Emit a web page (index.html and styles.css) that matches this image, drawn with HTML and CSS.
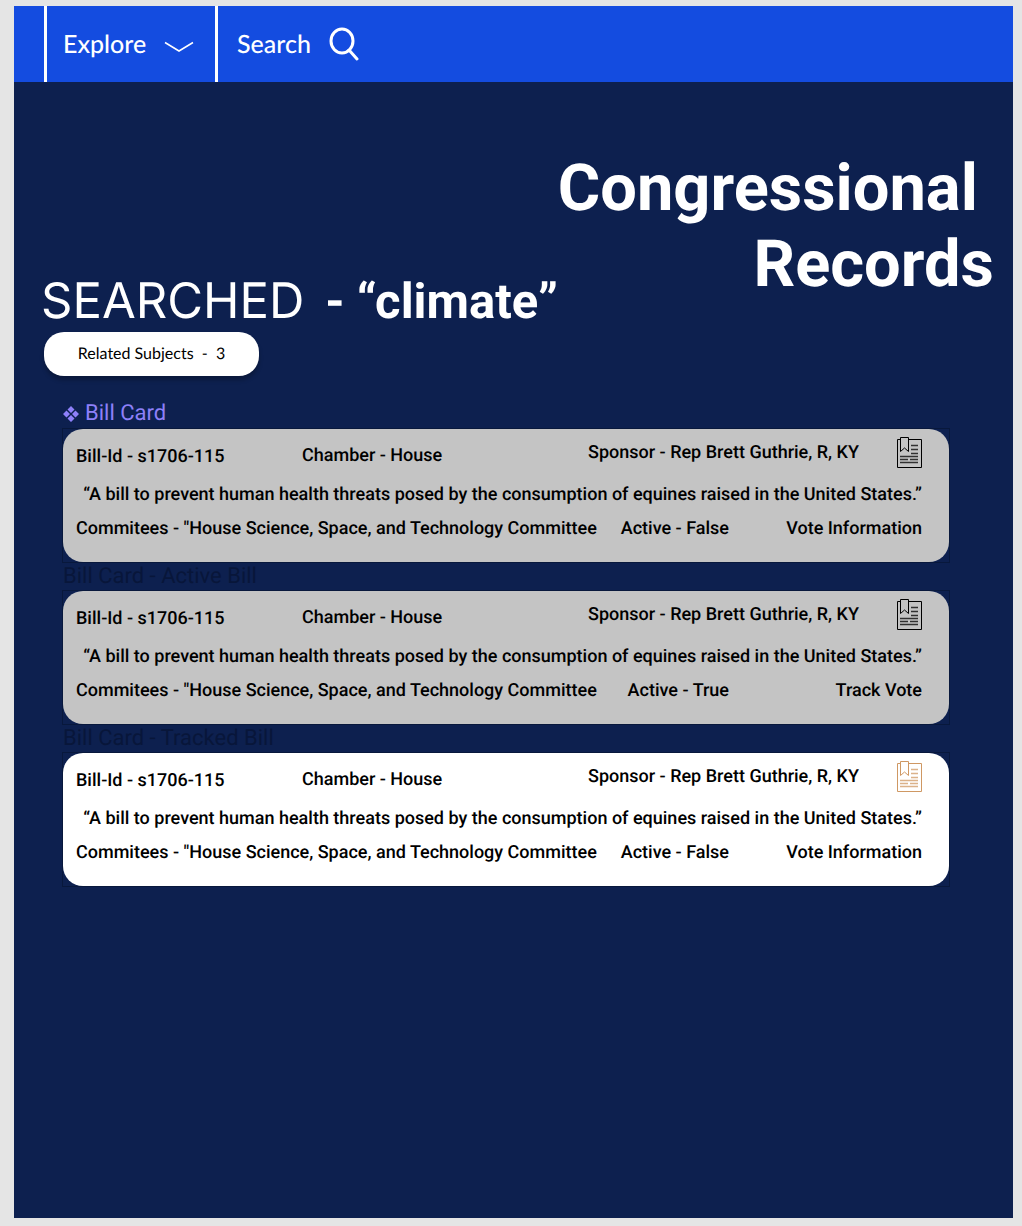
FILE: index.html
```html
<!DOCTYPE html>
<html lang="en">
<head>
<meta charset="utf-8">
<title>Congressional Records</title>
<link rel="stylesheet" href="styles.css">
</head>
<body>
<svg class="defs" aria-hidden="true">
  <symbol id="bill" viewBox="0 0 26 32">
    <path d="M4.500 3.500H1.500V31.500H25.500V3.500H12.500M4.500 15.500V1.500H12.500V15.500L8.500 12Z"/>
    <path d="M15 9.500H22M15 13.500H22M15 17.500H22M4 20.500H22M4 23.500H12M14 23.500H22M4 26.500H22" stroke-width="1.5" opacity=".75"/>
  </symbol>
</svg>
<div class="page">
  <nav class="nav">
    <button class="nav-item explore" type="button">Explore
      <svg class="chevron" viewBox="0 0 30 12" aria-hidden="true"><path d="M1 1.500 15 10 29 1.500"/></svg>
    </button>
    <button class="nav-item search" type="button">Search
      <svg class="lens" viewBox="0 0 30 34" aria-hidden="true"><ellipse cx="13" cy="14" rx="11" ry="12"/><path d="M20 23 28 32"/></svg>
    </button>
  </nav>
  <main>
    <h1 class="title">Congressional 
Records</h1>
    <h2 class="query"><span class="searched">SEARCHED</span><span>- “climate”</span></h2>
    <button class="subjects" type="button">Related Subjects&nbsp; -&nbsp; 3</button>
    <div class="bills">
      <h3 class="label label-main"><svg class="diamonds" viewBox="0 0 16 16" aria-hidden="true"><path d="M8 0 11.500 3.500 8 7 4.500 3.500ZM8 9 11.500 12.500 8 16 4.500 12.500ZM3.500 4.500 7 8 3.500 11.500 0 8ZM12.500 4.500 16 8 12.500 11.500 9 8Z"/></svg>Bill Card</h3>
      <div class="outline">
        <article class="card">
          <div class="row head"><span class="id">Bill-Id - s1706-115</span><span class="chamber">Chamber - House</span><span>Sponsor - Rep Brett Guthrie, R, KY</span><button class="track" type="button" aria-label="Track bill"><svg viewBox="0 0 26 32"><use href="#bill"/></svg></button></div>
          <p class="summary">“A bill to prevent human health threats posed by the consumption of equines raised in the United States.”</p>
          <div class="row foot"><span>Commitees - "House Science, Space, and Technology Committee</span><span>Active - False</span><button class="vote" type="button">Vote Information</button></div>
        </article>
      </div>
      <h3 class="label">Bill Card - Active Bill</h3>
      <div class="outline">
        <article class="card">
          <div class="row head"><span class="id">Bill-Id - s1706-115</span><span class="chamber">Chamber - House</span><span>Sponsor - Rep Brett Guthrie, R, KY</span><button class="track" type="button" aria-label="Track bill"><svg viewBox="0 0 26 32"><use href="#bill"/></svg></button></div>
          <p class="summary">“A bill to prevent human health threats posed by the consumption of equines raised in the United States.”</p>
          <div class="row foot"><span>Commitees - "House Science, Space, and Technology Committee</span><span>Active - True</span><button class="vote" type="button">Track Vote</button></div>
        </article>
      </div>
      <h3 class="label">Bill Card - Tracked Bill</h3>
      <div class="outline">
        <article class="card tracked">
          <div class="row head"><span class="id">Bill-Id - s1706-115</span><span class="chamber">Chamber - House</span><span>Sponsor - Rep Brett Guthrie, R, KY</span><button class="track" type="button" aria-label="Stop tracking bill"><svg viewBox="0 0 26 32"><use href="#bill"/></svg></button></div>
          <p class="summary">“A bill to prevent human health threats posed by the consumption of equines raised in the United States.”</p>
          <div class="row foot"><span>Commitees - "House Science, Space, and Technology Committee</span><span>Active - False</span><button class="vote" type="button">Vote Information</button></div>
        </article>
      </div>
    </div>
  </main>
</div>
</body>
</html>
```
FILE: styles.css
```css
* { box-sizing: border-box; }
body {
  margin: 0;
  padding: 6px 9px 8px 14px;
  background: #e5e5e5;
  font-family: Roboto, "Liberation Sans", sans-serif;
  text-rendering: geometricPrecision;
}
button {
  margin: 0;
  padding: 0;
  border: 0;
  background: none;
  color: inherit;
  font: inherit;
  text-rendering: inherit;
  cursor: pointer;
}
h1, h2, h3, p { margin: 0; }
svg { display: block; fill: none; stroke: currentColor; }
.defs { position: absolute; width: 0; height: 0; }
.page {
  min-height: calc(100vh - 14px);
  background: #0d204f;
  color: #fff;
}
.nav {
  display: flex;
  height: 76px;
  padding-left: 30px;
  background: #144ce0;
}
.nav-item {
  display: flex;
  align-items: center;
  gap: 18px;
  border-left: 3px solid #fff;
  font: 500 25px/30px Lato, sans-serif;
}
.explore { width: 171px; padding-left: 16px; }
.search { padding-left: 19px; }
.chevron { width: 30px; height: 12px; margin-top: 6px; stroke-width: 1.5; }
.lens { width: 30px; height: 34px; stroke-width: 3; stroke-linecap: round; }
.title {
  padding: 68px 19px 0 0;
  font-size: 65px;
  font-weight: 700;
  line-height: 76px;
  text-align: right;
  white-space: pre;
}
.query {
  display: flex;
  align-items: baseline;
  gap: 21px;
  margin-top: -29px;
  padding-left: 27px;
  font-size: 49px;
  font-weight: 700;
  line-height: 56px;
}
.searched { font-family: Inter, sans-serif; font-weight: 400; }
.subjects {
  display: block;
  width: 215px;
  height: 44px;
  margin: 2px 0 0 30px;
  border-radius: 20px;
  background: #fff;
  box-shadow: 0 4px 4px rgba(0, 0, 0, .25);
  color: #000;
  font: 400 16px/20px Lato, sans-serif;
}
.bills { margin: 24px 63px 0 48px; }
.label {
  display: flex;
  align-items: center;
  gap: 6px;
  height: 27px;
  padding-left: 1px;
  color: #08163a;
  font-size: 22px;
  font-weight: 400;
  line-height: 26px;
}
.label-main { height: 28px; color: #8e80fa; }
.diamonds { width: 16px; height: 16px; fill: currentColor; stroke: none; }
.outline { border: 1px solid #08183c; }
.card {
  height: 133px;
  padding: 7px 27px 0 13px;
  border-radius: 20px;
  background: #c4c4c4;
  color: #000;
  font-size: 18px;
  font-weight: 500;
  line-height: 22px;
}
.tracked { background: #fff; }
.row { display: grid; }
.head {
  grid-template-columns: 226px 286px 1fr auto;
  align-items: start;
  height: 48px;
  padding-top: 6px;
}
.id { padding-top: 4px; }
.chamber { padding-top: 3px; }
.track { margin-top: -6px; }
.track svg { width: 26px; height: 32px; }
.tracked .track { color: #cf9863; }
.summary { text-align: right; }
.foot {
  grid-template-columns: auto 1fr 193px;
  align-items: start;
  margin-top: 12px;
  text-align: right;
}
.foot span:first-child { text-align: left; }
.vote { text-align: right; }
```
